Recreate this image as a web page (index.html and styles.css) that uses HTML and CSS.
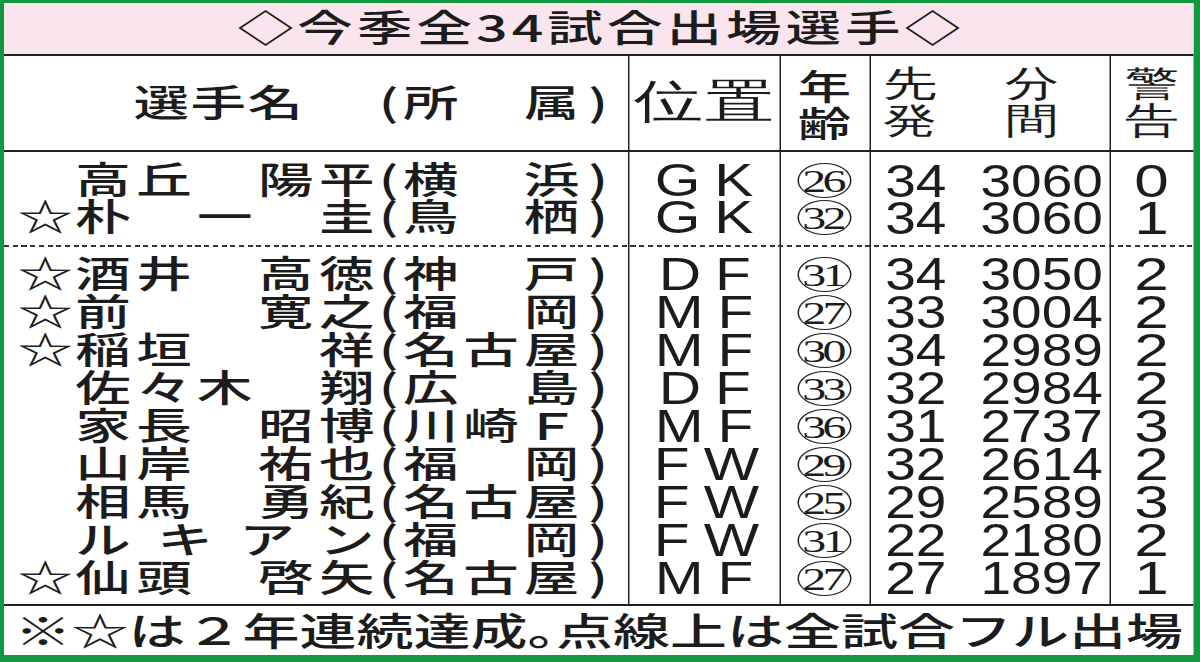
FILE: index.html
```html
<!DOCTYPE html>
<html lang="ja">
<head>
<meta charset="utf-8">
<title>今季全34試合出場選手</title>
<link rel="stylesheet" href="styles.css">
</head>
<body>
<div class="sheet">
  <div class="title">◇今季全34試合出場選手◇</div>
  <div class="table">
    <div class="thead">
      <div class="c-name"><span class="star"></span><span class="nm hn">選手名</span><span class="pl">(</span><span class="club">所　属</span><span class="pr">)</span></div>
      <div class="c-pos h">位置</div>
      <div class="c-age h stack">年<br>齢</div>
      <div class="c-stat h stack"><span>先<br>発</span><span>分<br>間</span></div>
      <div class="c-card h stack">警<br>告</div>
    </div>
    <div class="group g1">
      <div class="row">
        <div class="c-name"><span class="star"></span><span class="nm">高丘　陽平</span><span class="pl">(</span><span class="club">横　浜</span><span class="pr">)</span></div>
        <div class="c-pos"><span class="n">GK</span></div>
        <div class="c-age"><span class="circ">26</span></div>
        <div class="c-stat"><span class="st"><span class="n">34</span></span><span class="mn"><span class="n">3060</span></span></div>
        <div class="c-card"><span class="n">0</span></div>
      </div>
      <div class="row">
        <div class="c-name"><span class="star">☆</span><span class="nm">朴　一　圭</span><span class="pl">(</span><span class="club">鳥　栖</span><span class="pr">)</span></div>
        <div class="c-pos"><span class="n">GK</span></div>
        <div class="c-age"><span class="circ">32</span></div>
        <div class="c-stat"><span class="st"><span class="n">34</span></span><span class="mn"><span class="n">3060</span></span></div>
        <div class="c-card"><span class="n">1</span></div>
      </div>
    </div>
    <div class="dash"></div>
    <div class="group g2">
      <div class="row">
        <div class="c-name"><span class="star">☆</span><span class="nm">酒井　高徳</span><span class="pl">(</span><span class="club">神　戸</span><span class="pr">)</span></div>
        <div class="c-pos"><span class="n">DF</span></div>
        <div class="c-age"><span class="circ">31</span></div>
        <div class="c-stat"><span class="st"><span class="n">34</span></span><span class="mn"><span class="n">3050</span></span></div>
        <div class="c-card"><span class="n">2</span></div>
      </div>
      <div class="row">
        <div class="c-name"><span class="star">☆</span><span class="nm">前　　寛之</span><span class="pl">(</span><span class="club">福　岡</span><span class="pr">)</span></div>
        <div class="c-pos"><span class="n">MF</span></div>
        <div class="c-age"><span class="circ">27</span></div>
        <div class="c-stat"><span class="st"><span class="n">33</span></span><span class="mn"><span class="n">3004</span></span></div>
        <div class="c-card"><span class="n">2</span></div>
      </div>
      <div class="row">
        <div class="c-name"><span class="star">☆</span><span class="nm">稲垣　　祥</span><span class="pl">(</span><span class="club">名古屋</span><span class="pr">)</span></div>
        <div class="c-pos"><span class="n">MF</span></div>
        <div class="c-age"><span class="circ">30</span></div>
        <div class="c-stat"><span class="st"><span class="n">34</span></span><span class="mn"><span class="n">2989</span></span></div>
        <div class="c-card"><span class="n">2</span></div>
      </div>
      <div class="row">
        <div class="c-name"><span class="star"></span><span class="nm">佐々木　翔</span><span class="pl">(</span><span class="club">広　島</span><span class="pr">)</span></div>
        <div class="c-pos"><span class="n">DF</span></div>
        <div class="c-age"><span class="circ">33</span></div>
        <div class="c-stat"><span class="st"><span class="n">32</span></span><span class="mn"><span class="n">2984</span></span></div>
        <div class="c-card"><span class="n">2</span></div>
      </div>
      <div class="row">
        <div class="c-name"><span class="star"></span><span class="nm">家長　昭博</span><span class="pl">(</span><span class="club">川崎Ｆ</span><span class="pr">)</span></div>
        <div class="c-pos"><span class="n">MF</span></div>
        <div class="c-age"><span class="circ">36</span></div>
        <div class="c-stat"><span class="st"><span class="n">31</span></span><span class="mn"><span class="n">2737</span></span></div>
        <div class="c-card"><span class="n">3</span></div>
      </div>
      <div class="row">
        <div class="c-name"><span class="star"></span><span class="nm">山岸　祐也</span><span class="pl">(</span><span class="club">福　岡</span><span class="pr">)</span></div>
        <div class="c-pos"><span class="n">FW</span></div>
        <div class="c-age"><span class="circ">29</span></div>
        <div class="c-stat"><span class="st"><span class="n">32</span></span><span class="mn"><span class="n">2614</span></span></div>
        <div class="c-card"><span class="n">2</span></div>
      </div>
      <div class="row">
        <div class="c-name"><span class="star"></span><span class="nm">相馬　勇紀</span><span class="pl">(</span><span class="club">名古屋</span><span class="pr">)</span></div>
        <div class="c-pos"><span class="n">FW</span></div>
        <div class="c-age"><span class="circ">25</span></div>
        <div class="c-stat"><span class="st"><span class="n">29</span></span><span class="mn"><span class="n">2589</span></span></div>
        <div class="c-card"><span class="n">3</span></div>
      </div>
      <div class="row">
        <div class="c-name"><span class="star"></span><span class="nm">ルキアン</span><span class="pl">(</span><span class="club">福　岡</span><span class="pr">)</span></div>
        <div class="c-pos"><span class="n">FW</span></div>
        <div class="c-age"><span class="circ">31</span></div>
        <div class="c-stat"><span class="st"><span class="n">22</span></span><span class="mn"><span class="n">2180</span></span></div>
        <div class="c-card"><span class="n">2</span></div>
      </div>
      <div class="row">
        <div class="c-name"><span class="star">☆</span><span class="nm">仙頭　啓矢</span><span class="pl">(</span><span class="club">名古屋</span><span class="pr">)</span></div>
        <div class="c-pos"><span class="n">MF</span></div>
        <div class="c-age"><span class="circ">27</span></div>
        <div class="c-stat"><span class="st"><span class="n">27</span></span><span class="mn"><span class="n">1897</span></span></div>
        <div class="c-card"><span class="n">1</span></div>
      </div>
    </div>
  </div>
  <div class="foot">※☆は２年連続達成<span class="kuten">。</span>点線上は全試合フル出場</div>
</div>
</body>
</html>
```

FILE: styles.css
```css
* { box-sizing: border-box; margin: 0; padding: 0; }
html, body { width: 1200px; height: 662px; overflow: hidden; }
body { background: #14983f; }

/* the whole sheet is a horizontally widened (平体) newspaper table */
.sheet {
  --cols: 416px 101.33px 59.33px 160.67px 1fr;
  width: 793.33px;
  height: 652px;
  margin: 3px 0 0 4px;
  background: #fff;
  transform: scaleX(1.5);
  transform-origin: 0 0;
  color: #1c1c1c;
  font-family: "Noto Sans CJK JP", sans-serif;
  font-weight: 500;
  display: flex;
  flex-direction: column;
}

.title {
  height: 53px;
  line-height: 47px;
  background: #fae4ed;
  border-bottom: 2px solid #222;
  text-align: center;
  font-size: 37px;
  letter-spacing: 2.7px;
  padding-left: 2.7px;
}

.table {
  background-image:
    linear-gradient(#222, #222),
    linear-gradient(#222, #222),
    linear-gradient(#222, #222),
    linear-gradient(#222, #222);
  background-size: 1.33px 100%;
  background-repeat: no-repeat;
  background-position: 416px 0, 517.33px 0, 576.67px 0, 737.33px 0;
}

.thead {
  display: grid;
  grid-template-columns: var(--cols);
  height: 96px;
  padding-bottom: 4px;
  border-bottom: 2px solid #222;
  align-items: center;
  --rh: 41px;
}

.group.g1 { --rh: 37px; padding: 9.5px 0; }
.group.g2 { --rh: 38px; padding: 8.5px 0 7px; }

.dash {
  height: 1.5px;
  background: repeating-linear-gradient(90deg, #333 0 3.4px, transparent 3.4px 5.8px);
}

.row {
  display: grid;
  grid-template-columns: var(--cols);
  height: var(--rh);
}

/* name column */
.c-name {
  display: flex;
  padding-left: 9px;
  font-size: 37px;
  line-height: calc(var(--rh) - 4px);
  white-space: nowrap;
}
.star { width: 38.5px; }
.nm, .club {
  text-align: justify;
  text-align-last: justify;
}
.nm { width: 199.5px; }
.nm.hn {
  text-align: left;
  text-align-last: left;
  padding-left: 38.8px;
  letter-spacing: 1px;
}
.pl { width: 19px; text-align: center; }
.club { width: 117.5px; }
.pr { padding-left: 6px; }

/* header cells */
.h {
  font-size: 37px;
  line-height: 37px;
  text-align: center;
}
.h.stack {
  font-size: 35.5px;
  line-height: 37px;
  padding-top: 4px;
}
.c-pos.h { letter-spacing: 0.8px; padding-left: 0.8px; }
.c-stat.h {
  display: flex;
  text-align: left;
  padding-left: 9.5px;
  gap: 45px;
}

/* position */
.c-pos {
  font-family: "Liberation Sans", sans-serif;
  font-weight: 400;
  font-size: 46px;
  line-height: var(--rh);
  text-align: center;
}
.c-pos .n {
  letter-spacing: 11px;
  padding-left: 11px;
  transform: scaleX(.85);
  transform-origin: 50% 50%;
}

/* age */
.c-age {
  display: flex;
  align-items: center;
  justify-content: center;
}
.circ {
  display: inline-flex;
  align-items: center;
  justify-content: center;
  width: 36.5px;
  height: 35px;
  border: 1.2px solid #222;
  border-radius: 50%;
  font-family: "Liberation Serif", serif;
  font-weight: 400;
  font-size: 32px;
  line-height: 1;
  letter-spacing: -2.5px;
  padding-right: 2.5px;
  padding-top: 1px;
}

/* starts / minutes */
.c-stat {
  display: flex;
  font-family: "Liberation Sans", sans-serif;
  font-weight: 400;
  font-size: 47px;
  line-height: var(--rh);
}
.st { width: 51.33px; display: flex; justify-content: flex-end; }
.mn { flex: 1; display: flex; justify-content: flex-end; padding-right: 12.5px; }
.n {
  display: inline-block;
  transform: scaleX(.78);
  transform-origin: 100% 50%;
}

/* cautions */
.c-card {
  font-family: "Liberation Sans", sans-serif;
  font-weight: 400;
  font-size: 47px;
  line-height: var(--rh);
  text-align: center;
}
.c-card .n { transform: scaleX(.88); transform-origin: 50% 50%; }

.foot {
  border-top: 2px solid #222;
  height: 51px;
  line-height: 46px;
  font-size: 38px;
  letter-spacing: 0;
  padding-left: 7px;
  white-space: nowrap;
}
.kuten { font-feature-settings: "halt" 1; }
```
